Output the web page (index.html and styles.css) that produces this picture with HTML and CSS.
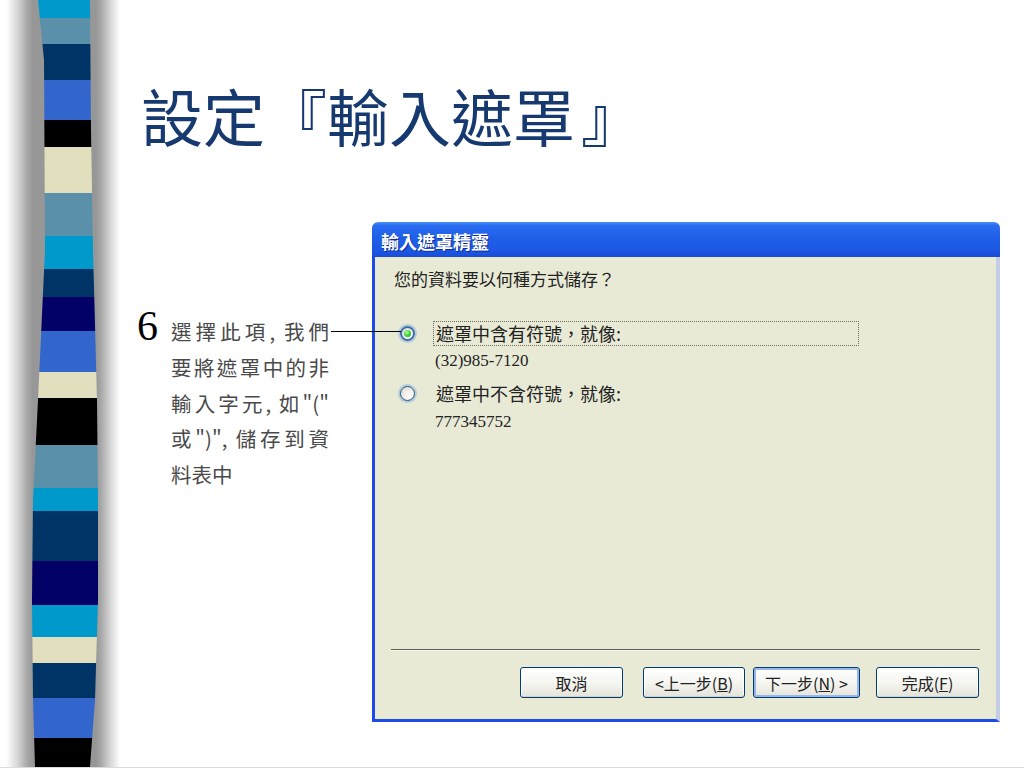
FILE: index.html
```html
<!DOCTYPE html>
<html lang="zh-Hant">
<head>
    <meta charset="UTF-8">
    <title>設定『輸入遮罩』</title>
    <link rel="stylesheet" href="styles.css">
</head>
<body>
<div class="slide">
    <div class="rail">
        <div class="stripe"></div>
    </div>
    <div class="content">
        <h1 class="title">設定『輸入遮罩<span class="close">』</span></h1>
        <div class="row">
            <div class="note">
                <span class="num">6</span>
                <div class="lines">
                    <div class="line first">選擇此項, 我們<span class="leader"></span></div>
                    <div class="line">要將遮罩中的非</div>
                    <div class="line">輸入字元, 如"("</div>
                    <div class="line">或")", 儲存到資</div>
                    <div class="line last">料表中</div>
                </div>
            </div>
            <div class="dialog">
                <div class="caption">輸入遮罩精靈</div>
                <div class="dlg-body">
                    <p class="ask">您的資料要以何種方式儲存？</p>
                    <div class="opt opt-1">
                        <span class="radio on"></span>
                        <span class="label focus">遮罩中含有符號，就像:</span>
                    </div>
                    <p class="sample sample-1">(32)985-7120</p>
                    <div class="opt opt-2">
                        <span class="radio"></span>
                        <span class="label">遮罩中不含符號，就像:</span>
                    </div>
                    <p class="sample sample-2">777345752</p>

                    <div class="sep"></div>
                    <div class="buttons">
                        <button class="btn btn-cancel">取消</button>
                        <button class="btn btn-back">&lt;上一步(<u>B</u>)</button>
                        <button class="btn btn-next default">下一步(<u>N</u>) &gt;</button>
                        <button class="btn btn-finish">完成(<u>F</u>)</button>
                    </div>
                </div>
            </div>
        </div>
    </div>
</div>
</body>
</html>
```

FILE: styles.css
```css
* {
    margin: 0;
    padding: 0;
}
body {
    background: #fff;
    font-family: "Noto Sans CJK TC", "Noto Sans CJK SC", sans-serif;
}
.slide {
    display: flex;
    width: 1024px;
    height: 767px;
    border-bottom: 1px solid #dcdcdc;
    overflow: hidden;
}

/* left striped bar */
.rail {
    width: 137px;
    flex: none;
    background: linear-gradient(to right, #fff 0, #fff 6px, #d4d4d4 18px, #a4a4a4 28px, #979797 33px,
        #979797 96px, #a8a8a8 101px, #d0d0d0 109px, #fff 120px);
}
.stripe {
    margin-left: 31px;
    width: 69px;
    height: 100%;
    clip-path: polygon(7px 0, 59px 0, 60px 130px, 62px 250px, 66px 400px, 67px 500px, 67px 600px, 64px 700px, 59px 767px,
        4px 767px, 2px 700px, 1px 600px, 2px 500px, 7px 400px, 14px 250px, 13px 60px);
    background: linear-gradient(to bottom,
        #0099cc 0 18px, #5a90aa 18px 44px, #003366 44px 80px, #3366cc 80px 120px,
        #000 120px 147px, #e1dfbe 147px 193px, #5a90aa 193px 236px, #0099cc 236px 269px,
        #003366 269px 297px, #000066 297px 331px, #3366cc 331px 372px, #e1dfbe 372px 398px,
        #000 398px 445px, #5a90aa 445px 488px, #0099cc 488px 511px, #003366 511px 561px,
        #000066 561px 605px, #0099cc 605px 637px, #e1dfbe 637px 663px, #003366 663px 698px,
        #3366cc 698px 738px, #000 738px);
}

.content {
    flex: 1;
    padding-top: 80px;
}
.title {
    font-size: 62px;
    line-height: 70px;
    font-weight: normal;
    color: #163a70;
    padding-left: 4px;
}
.title .close {
    padding-left: 6px;
}
.row {
    display: flex;
    margin-top: 70px;
}

/* callout note */
.note {
    width: 235px;
    flex: none;
    display: flex;
    align-items: baseline;
    padding-top: 89px;
}
.num {
    width: 34px;
    flex: none;
    font: 42px/35.8px "Liberation Serif", serif;
    color: #000;
}
.lines {
    width: 158px;
    font-size: 20.5px;
    line-height: 35.8px;
    color: #4a4a4a;
}
.line {
    text-align: justify;
    text-align-last: justify;
    white-space: nowrap;
}
.line.last {
    text-align-last: left;
}
.line.first {
    position: relative;
}
.leader {
    position: absolute;
    left: 100%;
    top: 17px;
    width: 70px;
    height: 1px;
    margin-left: 2px;
    background: #000;
}

/* wizard dialog */
.dialog {
    width: 628px;
    margin-top: 2px;
    display: flex;
    flex-direction: column;
}
.caption {
    height: 35px;
    padding-left: 9px;
    border-radius: 6px 6px 0 0;
    background: linear-gradient(#4c90f8 0, #2a6cf0 10%, #1f5fe8 45%, #1c58e3 80%, #1a4cd8 100%);
    color: #fff;
    font-size: 18px;
    font-weight: bold;
    line-height: 39px;
    text-shadow: 1px 1px 0 #0c2a9a;
}
.dlg-body {
    height: 465px;
    box-sizing: border-box;
    display: flex;
    flex-direction: column;
    padding: 12px 0 21px 19px;
    background: #e8ead6;
    border-left: 3px solid #1d4be6;
    border-right: 4px solid #c5cde6;
    border-bottom: 3px solid #1d4be6;
    color: #222;
}
.ask {
    font-size: 17px;
    line-height: 20px;
}
.opt {
    display: flex;
    align-items: center;
    height: 25px;
}
.opt-1 {
    margin-top: 32px;
}
.opt-2 {
    margin-top: 10px;
}
.radio {
    width: 15px;
    height: 15px;
    flex: none;
    margin-left: 6px;
    box-sizing: border-box;
    border-radius: 50%;
    border: 1px solid #1c5180;
    background: radial-gradient(circle at 65% 65%, #fff 0, #f4eee7 45%, #ddd5cb 100%);
    box-shadow: 0 0 0 2px rgba(140, 180, 225, .55);
    display: flex;
    align-items: center;
    justify-content: center;
}
.radio.on {
    border: 2px solid #3d6fa8;
}
.radio.on::after {
    content: '';
    width: 7px;
    height: 7px;
    border-radius: 50%;
    background: radial-gradient(circle at 40% 35%, #b8f8a8, #30d030 55%, #1aa81a);
}
.label {
    width: 426px;
    height: 25px;
    box-sizing: border-box;
    margin-left: 18px;
    padding-left: 2px;
    border: 1px dotted transparent;
    font-size: 18px;
    line-height: 23px;
}
.label.focus {
    border-color: #6b6b60;
}
.sample {
    padding-left: 41px;
    font: 17px/20px "Liberation Serif", serif;
    color: #222;
}
.sample-1 {
    margin-top: 5px;
}
.sample-2 {
    margin-top: 6px;
}
.sep {
    margin: auto 16px 0 -3px;
    height: 1px;
    background: #5e5d4e;
    border-bottom: 1px solid #f6f6ee;
}
.buttons {
    display: flex;
    justify-content: flex-end;
    margin: 16px 17px 0 0;
}
.btn {
    width: 103px;
    height: 31px;
    border: 1px solid #003c74;
    border-radius: 3px;
    background: linear-gradient(#ffffff, #f4f4f0 55%, #e4e2d8);
    box-shadow: inset 0 -1px 0 #d6d0c5, inset 0 0 0 1px #fff;
    font-family: "Noto Sans CJK TC", sans-serif;
    font-size: 16px;
    color: #222;
}
.btn u {
    text-decoration-thickness: 1px;
}
.btn-back {
    width: 102px;
    margin-left: 20px;
}
.btn-next {
    width: 107px;
    margin-left: 8px;
}
.btn-finish {
    margin-left: 16px;
}
.btn.default {
    box-shadow: inset 0 0 0 2px #97b7ea;
}
```
